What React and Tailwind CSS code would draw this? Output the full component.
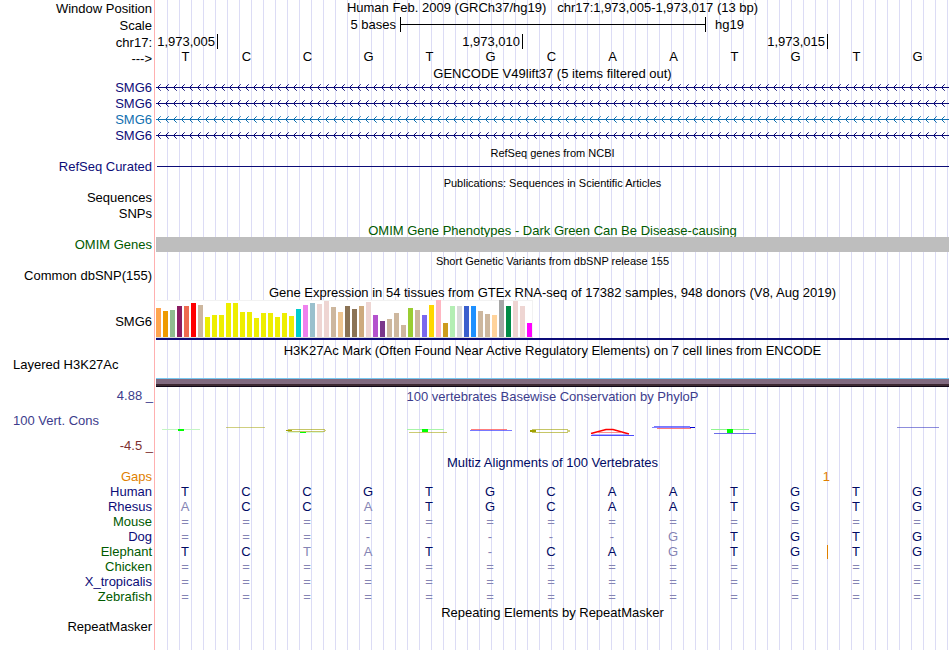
import React from "react";

const NAVY = "text-[#0c0c78]";
const GREEN = "text-[#005a00]";

function Row({ label, labelClass = "", labelPad = "pb-[2px]", height = "h-4", children, pad = "px-px", className = "" }) {
  return (
    <div className={`flex ${height}`}>
      <div className={`flex w-[155px] shrink-0 items-center justify-end pr-[3px] ${labelPad} ${labelClass}`}>
        {label}
      </div>
      <div className={`min-w-0 grow ${pad} ${className}`}>{children}</div>
    </div>
  );
}

function Title({ children, small, className = "", height = "h-4" }) {
  return (
    <Row height={height} className={`flex items-center justify-center ${small ? "pt-[2px] text-[11px]" : ""} ${className}`}>
      <h2>{children}</h2>
    </Row>
  );
}

function Intron({ id, color }) {
  return (
    <svg className="block h-4 w-full" aria-hidden="true" shapeRendering="crispEdges">
      <defs>
        <pattern id={id} width="8" height="16" patternUnits="userSpaceOnUse">
          <g fill={color}>
            <rect x="0" y="7" width="8" height="1" />
            <rect x="2" y="6" width="1" height="3" />
            <rect x="3" y="5" width="1" height="1" />
            <rect x="3" y="9" width="1" height="1" />
            <rect x="4" y="4" width="1" height="1" opacity=".7" />
            <rect x="4" y="10" width="1" height="1" opacity=".7" />
          </g>
        </pattern>
      </defs>
      <rect width="100%" height="16" fill={`url(#${id})`} />
    </svg>
  );
}

const tissues = [
  [29, "#ffa54f"], [26, "#ee9a00"], [27, "#8fbc8f"], [31, "#8b1c62"], [31, "#ee6a50"],
  [34, "#ff0000"], [32, "#cdb79e"], [20, "#eeee00"], [22, "#eeee00"], [22, "#eeee00"],
  [34, "#eeee00"], [34, "#eeee00"], [25, "#eeee00"], [25, "#eeee00"], [19, "#eeee00"],
  [24, "#eeee00"], [24, "#eeee00"], [20, "#eeee00"], [24, "#eeee00"], [21, "#eeee00"],
  [28, "#00cdcd"], [32, "#ee82ee"], [34, "#9ac0cd"], [33, "#eed5d2"], [36, "#eed5d2"],
  [30, "#cdb79e"], [25, "#eec591"], [31, "#8b7355"], [28, "#8b7355"], [31, "#cdaa7d"],
  [35, "#eed5d2"], [22, "#b452cd"], [16, "#7a378b"], [18, "#cdb79e"], [24, "#cdb79e"],
  [12, "#cdb79e"], [29, "#9acd32"], [27, "#cdb79e"], [22, "#7b68ee"], [32, "#ffd700"],
  [37, "#ffb6c1"], [14, "#cd9b1d"], [31, "#b4eeb4"], [31, "#d9d9d9"], [31, "#3a5fcd"],
  [31, "#1e90ff"], [26, "#cdb79e"], [23, "#cdb79e"], [22, "#ffd39b"], [37, "#a6a6a6"],
  [31, "#008b45"], [36, "#eed5d2"], [31, "#eed5d2"], [14, "#ff00ff"],
];

const alignments = [
  ["Human", NAVY, "TCCGTGCAATGTG", "1111111111111"],
  ["Rhesus", NAVY, "ACCATGCAATGTG", "0110111111111"],
  ["Mouse", GREEN, "=============", "0000000000000"],
  ["Dog", NAVY, "===-----GTGTG", "0000000001111"],
  ["Elephant", GREEN, "TCTAT-CAGTGTG", "1100101101111"],
  ["Chicken", GREEN, "=============", "0000000000000"],
  ["X_tropicalis", NAVY, "=============", "0000000000000"],
  ["Zebrafish", GREEN, "=============", "0000000000000"],
];

function Conservation() {
  return (
    <svg className="block h-12 w-full" viewBox="156 407 793 48" preserveAspectRatio="none" role="img" aria-label="PhyloP scores">
      <g fill="none" strokeWidth="1">
        <path d="M162 429.5H200" stroke="#c4f5c4" />
        <path d="M226 427.5H265" stroke="#a0a000" opacity=".5" />
        <path d="M288 429.5H325M288 431.5H325" stroke="#a0a000" opacity=".6" />
        <path d="M286 430.5H292" stroke="#a0a000" />
        <path d="M324 430.5H326" stroke="#a0a000" opacity=".5" />
        <path d="M286 432.5H323" stroke="#d8f8d8" />
        <path d="M407 429.5H444" stroke="#a8f5a8" />
        <path d="M409 432.5H447" stroke="#a0a000" opacity=".55" />
        <path d="M471 429.5H507" stroke="#ff5050" opacity=".75" />
        <path d="M470 430.5H512" stroke="#3030ff" opacity=".65" />
        <path d="M532 429.5H568M532 432.5H568" stroke="#a0a000" opacity=".6" />
        <path d="M530 431H536" stroke="#a0a000" strokeWidth="2" />
        <path d="M567 431H570" stroke="#a0a000" strokeWidth="2" opacity=".5" />
        <path d="M591 433.5L606 429.5H613L629 434" stroke="#ff0000" strokeWidth="1.5" />
        <path d="M598 432.5H622" stroke="#ff6060" opacity=".7" />
        <path d="M592 434.5H628" stroke="#8080ff" opacity=".6" />
        <path d="M591 435.5H634" stroke="#2020ff" opacity=".8" />
        <path d="M654 426.5H690" stroke="#3030ff" opacity=".65" />
        <path d="M652 427.5H695" stroke="#3030ff" opacity=".6" />
        <path d="M657 428.5H691" stroke="#ff5050" opacity=".75" />
        <path d="M690 427.5H695" stroke="#0000d0" />
        <path d="M711 429.5H749" stroke="#90f590" />
        <path d="M714 433.5H756" stroke="#3030e0" opacity=".7" />
        <path d="M897 427.5H939" stroke="#3030c0" opacity=".55" />
      </g>
      <g fill="#00ff00">
        <rect x="178" y="429" width="6" height="2" />
        <rect x="300" y="432" width="6" height="1" />
        <rect x="422" y="429" width="6" height="3" />
        <rect x="727" y="429" width="6" height="4" />
      </g>
    </svg>
  );
}

export default function App() {
  return (
    <main className="min-h-screen bg-[linear-gradient(to_right,#fff_154px,#ffb0b0_154px,#ffb0b0_155px,#fff_155px,#fff_156px,transparent_156px),repeating-linear-gradient(to_right,transparent_0px,transparent_11px,#dcdcf5_11px,#dcdcf5_12px)] font-['Liberation_Sans',Arial,sans-serif] text-[13px] leading-[15px] whitespace-nowrap text-black">
      <Row label="Window Position" labelPad="" height="h-[17px]" className="flex justify-center">
        <h1 className="whitespace-pre">Human Feb. 2009 (GRCh37/hg19)   chr17:1,973,005-1,973,017 (13 bp)</h1>
      </Row>
      <Row label="Scale" labelPad="" height="h-[17px]" className="grid grid-cols-13">
        <span className="col-span-4 pr-1 text-right">5 bases</span>
        <div className="col-span-5 -mr-px flex h-[15px] items-center border-x border-black">
          <div className="h-px w-full bg-black" />
        </div>
        <span className="col-span-4 pl-[10px]">hg19</span>
      </Row>
      <Row label="chr17:" labelPad="" height="h-[17px]" pad="pl-[2px]" className="grid grid-cols-13 text-right">
        <span className="flex h-[15px] items-end justify-end border-r border-black pr-[2px]">1,973,005</span>
        <span className="col-span-5 flex h-[15px] items-end justify-end border-r border-black pr-[2px]">1,973,010</span>
        <span className="col-span-5 flex h-[15px] items-end justify-end border-r border-black pr-[2px]">1,973,015</span>
      </Row>
      <Row label="--->" labelPad="" height="h-[15px]" pad="pr-[2px]">
        <div className="grid grid-cols-13 text-center leading-[12px]">
          {[..."TCCGTGCAATGTG"].map((b, i) => (
            <span key={i}>{b}</span>
          ))}
        </div>
      </Row>
      <Title height="h-[14px]">GENCODE V49lift37 (5 items filtered out)</Title>
      <Row label="SMG6" labelClass={NAVY}><Intron id="i1" color="#0c0c78" /></Row>
      <Row label="SMG6" labelClass={NAVY}><Intron id="i2" color="#0c0c78" /></Row>
      <Row label="SMG6" labelClass="text-[#1070b0]"><Intron id="i3" color="#1070b0" /></Row>
      <Row label="SMG6" labelClass={NAVY}><Intron id="i4" color="#0c0c78" /></Row>
      <Title small>RefSeq genes from NCBI</Title>
      <Row label="RefSeq Curated" labelClass={NAVY} height="h-[15px]" pad="pt-[6px] pl-[2px] pr-px">
        <div className="h-px w-full bg-[#0c0c78]" />
      </Row>
      <Title small height="h-[15px]">Publications: Sequences in Scientific Articles</Title>
      <Row label="Sequences" />
      <Row label="SNPs" labelPad="" height="h-[15px]" />
      <Title className="pt-[2px] text-[#005a00]">OMIM Gene Phenotypes - Dark Green Can Be Disease-causing</Title>
      <Row label="OMIM Genes" labelPad="" labelClass={GREEN} height="h-[15px]">
        <div className="relative h-full bg-[#bebebe]" />
      </Row>
      <Title small>Short Genetic Variants from dbSNP release 155</Title>
      <Row label="Common dbSNP(155)" />
      <Title>Gene Expression in 54 tissues from GTEx RNA-seq of 17382 samples, 948 donors (V8, Aug 2019)</Title>
      <Row label="SMG6" labelPad="pt-[2px]" height="h-10">
        <div className="flex h-[38px] w-fit items-end gap-[2px] border-t border-r border-b border-t-[#f2f2f2] border-r-[#f2f2f2] border-b-[#d8d8d8] bg-white">
          {tissues.map(([h, color], i) => (
            <div key={i} className="w-[5px]" style={{ height: h, background: color }} />
          ))}
        </div>
        <div className="h-[2px] bg-[#0c0c78]" />
      </Row>
      <Title height="h-[18px]" className="pt-[2px]">H3K27Ac Mark (Often Found Near Active Regulatory Elements) on 7 cell lines from ENCODE</Title>
      <div className="flex h-[29px]">
        <div className="w-[155px] shrink-0 pl-[13px] leading-[14px]">Layered H3K27Ac</div>
        <div className="flex grow flex-col justify-end px-px">
          <div className="h-px bg-[#78c8f0]" />
          <div className="h-[5px] bg-[#806a80]" />
          <div className="h-[2px] bg-[#3c2832]" />
          <div className="h-px bg-[#100818]" />
        </div>
      </div>
      <div className="flex h-[68px] text-[#3c3c8c]">
        <div className="flex w-[155px] shrink-0 flex-col justify-between pt-px pr-[2px] pb-[2px]">
          <span className="text-right">4.88 _</span>
          <span className="pl-[13px]">100 Vert. Cons</span>
          <span className="text-right text-[#7c3030]">-4.5 _</span>
        </div>
        <div className="grow px-px">
          <h2 className="h-5 pt-[2px] text-center">100 vertebrates Basewise Conservation by PhyloP</h2>
          <Conservation />
        </div>
      </div>
      <Title height="h-[15px]" className="text-[#000a64]">Multiz Alignments of 100 Vertebrates</Title>
      <Row label="Gaps" labelClass="text-[#e08000]" height="h-[15px]" pad="pl-[2px]" className="grid grid-cols-13">
        <span className="col-span-11 -mr-[2px] text-right leading-[13px] text-[#e08000]">1</span>
      </Row>
      <table className="w-full table-fixed border-collapse leading-[13px]">
        <colgroup>
          <col className="w-[155px]" />
          {[..."TCCGTGCAATGTG"].map((_, i) => <col key={i} />)}
          <col className="w-[2px]" />
        </colgroup>
        <tbody>
          {alignments.map(([name, cls, seq, match]) => (
            <tr key={name} className="h-[15px] align-top">
              <th scope="row" className={`p-0 pr-[3px] text-right font-normal ${cls}`}>{name}</th>
              {[...seq].map((b, i) => (
                <td key={i} className={`relative p-0 pr-px text-center ${match[i] === "1" ? "text-[#000a64]" : "text-[#8484b4]"}`}>
                  {b}
                  {name === "Elephant" && i === 10 && (
                    <i className="absolute top-0 -right-[2px] h-[14px] w-px bg-[#e08000]" />
                  )}
                </td>
              ))}
              <td className="p-0" />
            </tr>
          ))}
        </tbody>
      </table>
      <Title height="h-[15px]">Repeating Elements by RepeatMasker</Title>
      <Row label="RepeatMasker" height="h-[15px]" />
    </main>
  );
}
